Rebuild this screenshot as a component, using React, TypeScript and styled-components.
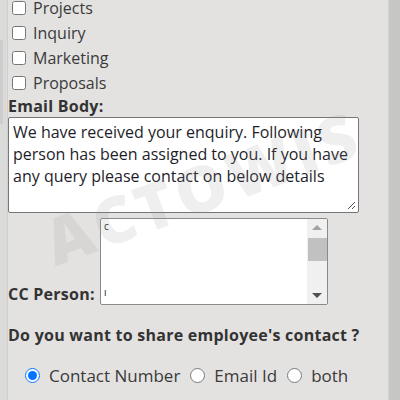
import styled, { createGlobalStyle } from "styled-components";

const GlobalStyle = createGlobalStyle`
    html, body {
        margin: 0;
        padding: 0;
        background: #e3e2e1;
        overflow: hidden;
    }
    body {
        font-family: "Open Sans", "Noto Sans", sans-serif;
        color: #333;
    }
`;

/* ------------------ Styled ------------------ */

const Page = styled.div`
    width: 400px;
    height: 400px;
    display: flex;
    overflow: hidden;
`;

const LeftRail = styled.div`
    width: 7px;
    background: #dadad9;
    border-right: 1px solid #cfcfcf;
    display: flex;
    flex-direction: column;
    padding-top: 40px;
`;

const RailThumb = styled.div`
    width: 3px;
    height: 84px;
    background: #cdcdcd;
`;

const Main = styled.div`
    position: relative;
    width: 380px;
    background: #e3e2e1;
    overflow: hidden;
`;

const RightRail = styled.div`
    flex: 1;
    background: #c6c6c5;
    border-left: 1px solid #d2d2d2;
`;

const Content = styled.div`
    margin-top: -5px;
    display: flex;
    flex-direction: column;
`;

const CheckRow = styled.label`
    height: 25px;
    display: flex;
    align-items: center;
    font-size: 16px;
    color: #3a3a3a;

    input {
        width: 14px;
        height: 14px;
        margin: 0 7px 0 4px;
        accent-color: #0075ff;
    }
`;

const FieldLabel = styled.div`
    font-size: 16px;
    font-weight: 700;
    letter-spacing: 0.25px;
    color: #333;
    line-height: 22px;
`;

const BodyArea = styled.div`
    box-sizing: border-box;
    width: 351px;
    height: 96px;
    background: #fff;
    border: 1px solid #767676;
    border-radius: 2px;
    padding: 3px 4px;
    font-size: 16px;
    line-height: 22px;
    color: #1e1e2a;
    position: relative;
`;

const ResizeGrip = styled.svg`
    position: absolute;
    right: 2px;
    bottom: 2px;
`;

const CcRow = styled.div`
    display: flex;
    align-items: flex-end;
    margin-top: 5px;
    gap: 4px;
`;

const CcLabel = styled(FieldLabel)`
    width: 88px;
`;

const ListBox = styled.div`
    box-sizing: border-box;
    width: 228px;
    height: 87px;
    background: #fff;
    border: 1px solid #8a8a8a;
    border-radius: 2px;
    display: flex;
`;

const ListItems = styled.div`
    flex: 1;
    position: relative;
    color: #222;
`;

const Frag = styled.span<{ $top?: boolean }>`
    position: absolute;
    left: 3px;
    font-size: 10px;
    line-height: 10px;
    ${(p) => (p.$top ? "top: 2px;" : "bottom: 7px;")}
`;

const ScrollTrack = styled.div`
    width: 20px;
    background: #f0f0f0;
    display: flex;
    flex-direction: column;
    align-items: center;
`;

const Arrow = styled.div<{ $down?: boolean }>`
    height: 17px;
    display: flex;
    align-items: center;
    justify-content: center;

    &::before {
        content: "";
        border-left: 5px solid transparent;
        border-right: 5px solid transparent;
        ${(p) => (p.$down ? "border-top: 5px solid #505050;" : "border-bottom: 5px solid #a3a3a3;")}
    }
`;

const Thumb = styled.div`
    width: 19px;
    height: 23px;
    background: #c1c1c1;
    margin-top: 2px;
`;

const TrackFill = styled.div`
    flex: 1;
`;

const Question = styled(FieldLabel)`
    margin-top: 19px;
`;

const RadioRow = styled.div`
    display: flex;
    align-items: center;
    margin-top: 18px;
    padding-left: 17px;
    font-size: 17px;
    color: #3a3a3a;
`;

const RadioItem = styled.label`
    display: flex;
    align-items: center;

    input {
        width: 15px;
        height: 15px;
        margin: 0 9px 0 0;
        accent-color: #0075ff;
    }
    & + & {
        margin-left: 10px;
    }
`;

const Watermark = styled.div`
    position: absolute;
    left: 28px;
    top: 214px;
    font-family: "Open Sans", sans-serif;
    font-size: 64px;
    font-weight: 800;
    letter-spacing: 4px;
    line-height: 64px;
    color: rgba(150, 150, 150, 0.15);
    transform: rotate(-20deg);
    transform-origin: left top;
    pointer-events: none;
    white-space: nowrap;
`;

/* ------------------ Component ------------------ */

const CATEGORIES = ["Projects", "Inquiry", "Marketing", "Proposals"];
const CONTACT_OPTIONS = ["Contact Number", "Email Id", "both"];

export default function App() {
    return (
        <>
            <GlobalStyle />
            <Page>
                <LeftRail>
                    <RailThumb />
                </LeftRail>
                <Main>
                    <Content>
                        {CATEGORIES.map((c) => (
                            <CheckRow key={c}>
                                <input type="checkbox" />
                                {c}
                            </CheckRow>
                        ))}
                        <FieldLabel>Email Body:</FieldLabel>
                        <BodyArea>
                            We have received your enquiry. Following person has been assigned to you. If you have any query please contact on below details
                            <ResizeGrip width="9" height="9" viewBox="0 0 9 9">
                                <path d="M8 1 L1 8 M8 5 L5 8" stroke="#555" strokeWidth="1" />
                            </ResizeGrip>
                        </BodyArea>
                        <CcRow>
                            <CcLabel>CC Person:</CcLabel>
                            <ListBox>
                                <ListItems>
                                    <Frag $top>c</Frag>
                                    <Frag>ı</Frag>
                                </ListItems>
                                <ScrollTrack>
                                    <Arrow />
                                    <Thumb />
                                    <TrackFill />
                                    <Arrow $down />
                                </ScrollTrack>
                            </ListBox>
                        </CcRow>
                        <Question>Do you want to share employee's contact ?</Question>
                        <RadioRow>
                            {CONTACT_OPTIONS.map((o, i) => (
                                <RadioItem key={o}>
                                    <input type="radio" name="share" defaultChecked={i === 0} />
                                    {o}
                                </RadioItem>
                            ))}
                        </RadioRow>
                    </Content>
                    <Watermark>ACTOWIS</Watermark>
                </Main>
                <RightRail />
            </Page>
        </>
    );
}
